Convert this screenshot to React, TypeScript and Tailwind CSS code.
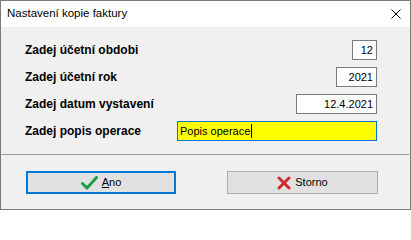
export default function App() {
  const rows = [
    { label: "Zadej účetní obdobi", value: "12", width: "w-[25px]" },
    { label: "Zadej účetní rok", value: "2021", width: "w-[41px]" },
    { label: "Zadej datum vystavení", value: "12.4.2021", width: "w-[81px]" },
  ];

  return (
    <div className="w-[411px] h-[210px] flex flex-col bg-[#f0f0f0] border border-[#7a7a7a] font-['Liberation_Sans',Arial,sans-serif] text-black">
      {/* Title bar */}
      <div className="h-[26px] bg-white flex items-center justify-between pl-[6px] pr-[9px] shrink-0">
        <span className="text-[11.5px]">Nastavení kopie faktury</span>
        <svg width="10" height="10" viewBox="0 0 10 10" className="text-black">
          <path d="M0.5 0.5 L9.5 9.5 M9.5 0.5 L0.5 9.5" stroke="currentColor" strokeWidth="1" />
        </svg>
      </div>

      {/* Fields */}
      <div className="flex flex-col gap-[7px] pt-[13px] pb-[13px] pl-[24px] pr-[32px] border-b border-[#a0a0a0] mr-px">
        {rows.map((row) => (
          <div key={row.label} className="h-[20px] flex items-center justify-between">
            <span className="text-[12px] font-bold">{row.label}</span>
            <div
              className={`${row.width} h-[20px] bg-white border border-[#7a7a7a] flex items-center justify-end pr-[3px] text-[11px]`}
            >
              {row.value}
            </div>
          </div>
        ))}
        <div className="h-[20px] flex items-center justify-between">
          <span className="text-[12px] font-bold">Zadej popis operace</span>
          <div className="w-[200px] h-[20px] bg-[#ffff00] border border-[#0078d7] flex items-center pl-[2px] text-[11px]">
            Popis operace
            <span className="inline-block w-px h-[14px] bg-black ml-px" />
          </div>
        </div>
      </div>

      {/* Buttons */}
      <div className="flex-1 flex items-start justify-between pt-[16px] pl-[25px] pr-[32px]">
        <button className="w-[150px] h-[23px] bg-[#e1e1e1] border-2 border-[#0078d7] flex items-center justify-center gap-[4px] text-[11px]">
          <svg width="17" height="14" viewBox="0 0 17 14">
            <path d="M1.5 7.5 L6 12 L15.5 1.5" fill="none" stroke="#1e9e4a" strokeWidth="3" strokeLinecap="round" strokeLinejoin="round" />
          </svg>
          <span>
            <span className="underline">A</span>no
          </span>
        </button>
        <button className="w-[151px] h-[23px] bg-[#e1e1e1] border border-[#adadad] flex items-center justify-center gap-[4px] text-[11px]">
          <svg width="14" height="14" viewBox="0 0 14 14">
            <path d="M2 2 L12 12 M12 2 L2 12" fill="none" stroke="#d02a2a" strokeWidth="3" strokeLinecap="round" />
          </svg>
          <span>Storno</span>
        </button>
      </div>
    </div>
  );
}
